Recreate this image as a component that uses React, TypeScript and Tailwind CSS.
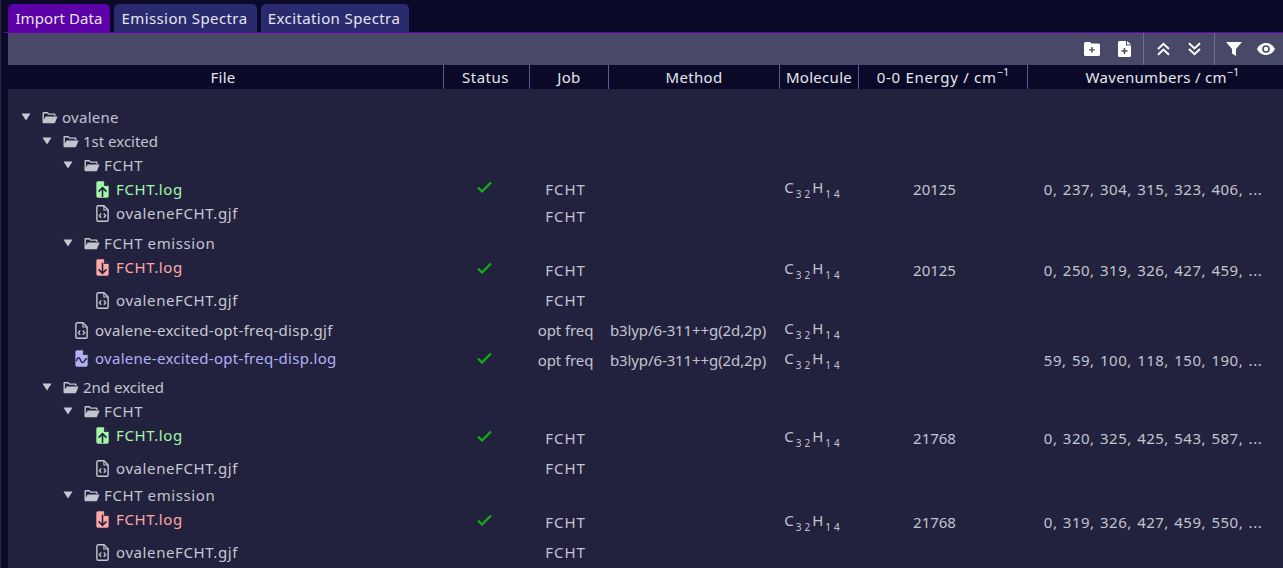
import React from "react";

const FONT = "font-['Noto_Sans','Open_Sans',sans-serif]";

const Caret = () => (
  <svg width="10" height="8" viewBox="0 0 10 8" className="shrink-0">
    <path d="M0.5 0.5H9.5L5 7.5Z" fill="#c8c8d2" />
  </svg>
);

const Folder = () => (
  <svg width="16" height="13" viewBox="0 0 16 13" className="shrink-0" fill="#c4c4ce">
    <path d="M1.5 1h4l1.5 1.5h5.5a1 1 0 0 1 1 1V5h-1.3V3.8H6.4L5 2.4H1.9v6.2L3.6 5.4h12l-2.6 6.3a1 1 0 0 1-.9.6H1.5a1 1 0 0 1-1-1V2a1 1 0 0 1 1-1z" />
  </svg>
);

const FileBase = ({ fill, children }: { fill: string; children: React.ReactNode }) => (
  <svg width="13" height="17" viewBox="0 0 12 16" className="shrink-0">
    <path d="M1.5 0.3H7.5L11.8 4.5V14.2a1.5 1.5 0 0 1-1.5 1.5H1.7A1.5 1.5 0 0 1 .2 14.200V1.800A1.500 1.500 0 0 1 1.500 .3Z" fill={fill} />
    <path d="M7.8 0.3V4.2H11.700" fill="#22223f" stroke="#22223f" strokeWidth="0.8" />
    {children}
  </svg>
);

const CodeIcon = () => (
  <svg width="13" height="17" viewBox="0 0 12 16" className="shrink-0" fill="none" stroke="#c8c8d2">
    <path d="M2 .7H7.3L11.3 4.7V14a1.3 1.3 0 0 1-1.3 1.3H2A1.3 1.3 0 0 1 .7 14V2A1.3 1.3 0 0 1 2 .7Z" strokeWidth="1.3" />
    <path d="M7.3 .7V4.7H11.3" strokeWidth="1" />
    <path d="M4.8 8 3 10l1.800 2M7.200 8 9 10l-1.800 2" strokeWidth="1.2" />
  </svg>
);

const UpIcon = () => (
  <FileBase fill="#a4f7a8">
    <path d="M6 15V6.500M2.300 10 6 6.300 9.700 10" fill="none" stroke="#22223f" strokeWidth="1.5" />
  </FileBase>
);
const DownIcon = () => (
  <FileBase fill="#ffa8a8">
    <path d="M6 3.500V13M2.300 9.800 6 13.500 9.700 9.800" fill="none" stroke="#22223f" strokeWidth="1.500" />
  </FileBase>
);
const WaveIcon = () => (
  <FileBase fill="#b0b0f5">
    <path d="M1 10.500c1.200-3.500 2.500-4 3.500-2.200s1.500 4.200 3 3.400S9.500 8.500 11 8" fill="none" stroke="#22223f" strokeWidth="1.300" />
  </FileBase>
);

const Check = () => (
  <svg width="15" height="12" viewBox="0 0 15 12" fill="none" stroke="#12b012" strokeWidth="2.2" className="-mt-1">
    <path d="M1 6.500 5 10.500 14 1.500" />
  </svg>
);

const Sub = ({ children }: { children: React.ReactNode }) => (
  <sub className="text-[10px] tracking-[3px] align-[-2px] leading-none ml-[2px] mr-[-1px]">{children}</sub>
);

const Formula = () => (
  <span className="whitespace-nowrap -mt-0.5">
    C<Sub>32</Sub>H<Sub>14</Sub>
  </span>
);

type Row = {
  n: string;
  d: number;
  kind: "folder" | "gjf" | "up" | "down" | "wave";
  h: string;
  fileClass?: string;
  track: string;
  status?: boolean;
  job?: string;
  jobTrack?: string;
  method?: string;
  mol?: boolean;
  e?: string;
  w?: string;
};

const pad = ["pl-[13px]", "pl-[34px]", "pl-[55px]", "pl-[88px]", "pl-[67px]"];
const METHOD = "b3lyp/6-311++g(2d,2p)";
const FJ = "tracking-[1px]";
const OJ = "tracking-[-0.1px]";
const T0 = "tracking-normal";
const T1 = "tracking-[0.28px]";
const T2 = "tracking-[0.6px]";

const rows: Row[] = [
  { n: "ovalene", d: 0, kind: "folder", h: "h-6", track: T1 },
  { n: "1st excited", d: 1, kind: "folder", h: "h-6", track: T0 },
  { n: "FCHT", d: 2, kind: "folder", h: "h-6", track: T2 },
  { n: "FCHT.log", d: 3, kind: "up", h: "h-6", track: T2, status: true, job: "FCHT", jobTrack: FJ, mol: true, e: "20125", w: "0, 237, 304, 315, 323, 406, ..." },
  { n: "ovaleneFCHT.gjf", d: 3, kind: "gjf", h: "h-[30px]", track: T2, fileClass: "pb-1.5", job: "FCHT", jobTrack: FJ },
  { n: "FCHT emission", d: 2, kind: "folder", h: "h-6", track: T2 },
  { n: "FCHT.log", d: 3, kind: "down", h: "h-[30px]", track: T2, fileClass: "pb-1.5", status: true, job: "FCHT", jobTrack: FJ, mol: true, e: "20125", w: "0, 250, 319, 326, 427, 459, ..." },
  { n: "ovaleneFCHT.gjf", d: 3, kind: "gjf", h: "h-[30px]", track: T2, job: "FCHT", jobTrack: FJ },
  { n: "ovalene-excited-opt-freq-disp.gjf", d: 4, kind: "gjf", h: "h-[30px]", track: T1, job: "opt freq", jobTrack: OJ, method: METHOD, mol: true },
  { n: "ovalene-excited-opt-freq-disp.log", d: 4, kind: "wave", h: "h-[30px]", track: T1, fileClass: "pb-1", status: true, job: "opt freq", jobTrack: OJ, method: METHOD, mol: true, w: "59, 59, 100, 118, 150, 190, ..." },
  { n: "2nd excited", d: 1, kind: "folder", h: "h-6", track: T0 },
  { n: "FCHT", d: 2, kind: "folder", h: "h-6", track: T2 },
  { n: "FCHT.log", d: 3, kind: "up", h: "h-[30px]", track: T2, fileClass: "pb-1.5", status: true, job: "FCHT", jobTrack: FJ, mol: true, e: "21768", w: "0, 320, 325, 425, 543, 587, ..." },
  { n: "ovaleneFCHT.gjf", d: 3, kind: "gjf", h: "h-[30px]", track: T2, job: "FCHT", jobTrack: FJ },
  { n: "FCHT emission", d: 2, kind: "folder", h: "h-6", track: T2 },
  { n: "FCHT.log", d: 3, kind: "down", h: "h-[30px]", track: T2, fileClass: "pb-1.5", status: true, job: "FCHT", jobTrack: FJ, mol: true, e: "21768", w: "0, 319, 326, 427, 459, 550, ..." },
  { n: "ovaleneFCHT.gjf", d: 3, kind: "gjf", h: "h-[30px]", track: T2, job: "FCHT", jobTrack: FJ },
];

const nameColor: Record<Row["kind"], string> = {
  folder: "text-[#c4c4ce]",
  gjf: "text-[#c8c8d2]",
  up: "text-[#a4f7a8]",
  down: "text-[#ffa8a8]",
  wave: "text-[#b0b0f5]",
};

const cols = "grid grid-cols-[435px_86px_79px_171px_79px_169px_minmax(0,1fr)]";

const Icon = ({ k }: { k: Row["kind"] }) =>
  k === "gjf" ? <CodeIcon /> : k === "up" ? <UpIcon /> : k === "down" ? <DownIcon /> : k === "wave" ? <WaveIcon /> : <Folder />;

const Head = ({ children, first, className = "" }: { children: React.ReactNode; first?: boolean; className?: string }) => (
  <div className={`flex items-center justify-center whitespace-nowrap text-[#e6e6ee] ${first ? "" : "border-l border-[#5a5a9a]"} ${className}`}>
    {children}
  </div>
);

const Sup = () => <sup className="text-[11px] leading-none align-[5px] tracking-normal">−1</sup>;

const Sep = ({ className = "" }: { className?: string }) => <div className={`w-px h-8 bg-[#70708c] ${className}`} />;

const DoubleChevron = ({ up, className = "" }: { up?: boolean; className?: string }) => (
  <svg width="13" height="14" viewBox="0 0 13 14" fill="none" stroke="#fff" strokeWidth="2" className={className}>
    {up ? <path d="M1 7 6.500 1.800 12 7M1 12.800 6.500 7.600 12 12.800" /> : <path d="M1 1.200 6.500 6.400 12 1.200M1 7 6.500 12.200 12 7" />}
  </svg>
);

export default function App() {
  return (
    <div className={`w-[1283px] h-[568px] overflow-hidden bg-[#0a0a28] border-l border-[#26263e] pl-[7px] text-[15px] leading-none ${FONT}`}>
      <div className="flex gap-[4px] h-[33px] pt-1 border-b border-[#6a00b0] -ml-1 pl-1">
        <div className="w-[102px] flex items-center justify-center rounded-t-[5px] bg-[#5c00a8] text-[#e6e6ee] tracking-[0.1px]">Import Data</div>
        <div className="w-[143px] flex items-center justify-center rounded-t-[5px] bg-[#2a2a6e] text-[#e6e6ee] tracking-[0.4px] pr-[2px]">Emission Spectra</div>
        <div className="w-[148px] flex items-center justify-center rounded-t-[5px] bg-[#2a2a6e] text-[#e6e6ee] tracking-[0.4px] pr-[2px]">Excitation Spectra</div>
      </div>
      <div className="h-8 bg-[#484868] flex items-center justify-end pr-2">
        <svg width="16" height="14" viewBox="0 0 16 14" className="mr-[18px]"><path fillRule="evenodd" fill="#fff" d="M1.500 0h4.500l1.500 1.500h7a1.500 1.500 0 0 1 1.500 1.500v9.500a1.500 1.500 0 0 1-1.500 1.500h-13A1.500 1.500 0 0 1 0 12.500V1.500A1.500 1.500 0 0 1 1.500 0zM7.200 5v2.200H5v1.400h2.200v2.200h1.400V8.600h2.200V7.200H8.600V5z" /></svg>
        <svg width="13" height="16" viewBox="0 0 13 16" className="mr-[12px]"><path fillRule="evenodd" fill="#fff" d="M1.500 0H8v4.500h5V14.500a1.500 1.500 0 0 1-1.500 1.500h-10A1.500 1.500 0 0 1 0 14.500V1.500A1.500 1.500 0 0 1 1.500 0zM5.700 7v2.300H3.500v1.400h2.200V13h1.500v-2.300h2.300V9.300H7.200V7zM9 0l4 3.500H9z" /></svg>
        <Sep className="mr-[13px]" />
        <DoubleChevron up className="mr-[18px]" />
        <DoubleChevron className="mr-[13px]" />
        <Sep className="mr-[11px]" />
        <svg width="16" height="14" viewBox="0 0 16 14" className="mr-[15px]"><path fill="#fff" d="M0 0H16L10 7V14L6 11.500V7Z" /></svg>
        <svg width="18" height="12" viewBox="0 0 18 12"><path fillRule="evenodd" fill="#fff" d="M9 0c4 0 7.300 2.500 9 6-1.700 3.500-5 6-9 6S1.700 9.500 0 6c1.700-3.500 5-6 9-6zm0 2.200A3.800 3.800 0 1 0 9 9.800 3.800 3.800 0 0 0 9 2.200zM9 3.800A2.200 2.200 0 1 1 9 8.200 2.200 2.200 0 0 1 9 3.800z" /></svg>
      </div>
      <div className={`${cols} h-6 tracking-[0.3px]`}>
        <Head first className="pr-[5px]">File</Head>
        <Head className="tracking-[0.5px] pr-[2px]">Status</Head>
        <Head>Job</Head>
        <Head>Method</Head>
        <Head>Molecule</Head>
        <Head className="tracking-[0.7px]">0-0 Energy / cm<Sup /></Head>
        <Head className="pl-[14px]">Wavenumbers / cm<Sup /></Head>
      </div>
      <div className="bg-[#22223f] pt-4 text-[#c4c4ce] h-full">
        {rows.map((r, i) => (
          <div key={i} className={`${cols} ${r.h}`}>
            <div className={`flex items-center whitespace-nowrap ${r.track} ${pad[r.d]} ${r.fileClass ?? ""}`}>
              {r.kind === "folder" && <span className="mr-[11px] flex"><Caret /></span>}
              <span className={`${r.kind === "folder" ? "mr-[4px]" : "mr-[7px]"} flex`}><Icon k={r.kind} /></span>
              <span className={nameColor[r.kind]}>{r.n}</span>
            </div>
            <div className="flex items-center justify-center pr-[4px]">{r.status && <Check />}</div>
            <div className={`flex items-center justify-center pr-[6px] ${r.jobTrack ?? ""}`}>{r.job}</div>
            <div className="flex items-center justify-center whitespace-nowrap pr-[11px] tracking-[-0.1px]">{r.method}</div>
            <div className="flex items-center justify-center pr-[11px]">{r.mol && <Formula />}</div>
            <div className="flex items-center justify-center pr-[16px]">{r.e}</div>
            <div className="flex items-center justify-center whitespace-nowrap pr-[4px] tracking-[0.5px] [word-spacing:1px]">{r.w}</div>
          </div>
        ))}
      </div>
    </div>
  );
}
